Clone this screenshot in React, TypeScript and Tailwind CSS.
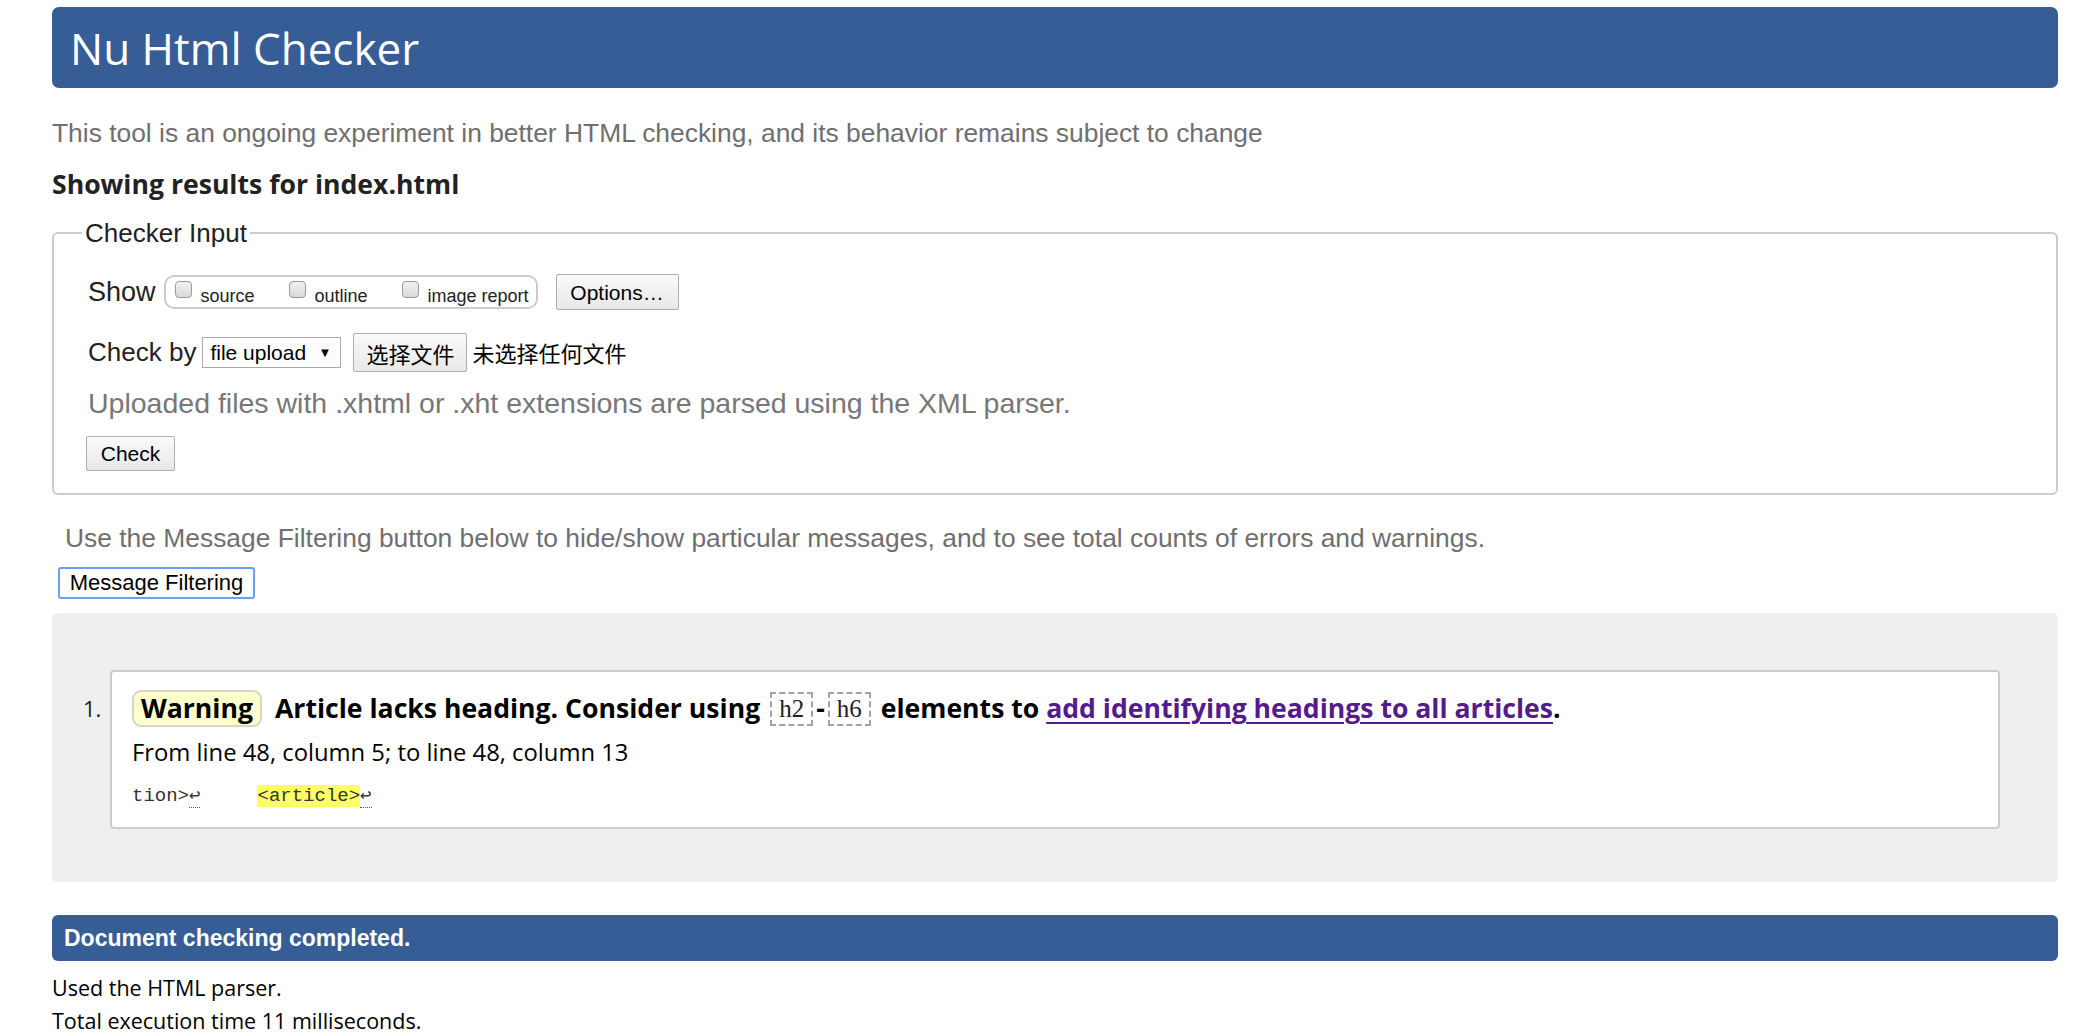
import React from "react"

const arial = "font-['Liberation_Sans',Arial,sans-serif]"
const segoe = "font-['Open_Sans',sans-serif]"
const mono = "font-['Liberation_Mono',monospace]"
const serif = "font-['Liberation_Serif',serif]"

function Checkbox({ label, className = "" }: { label: string; className?: string }) {
  return (
    <span className={`flex items-start gap-[9px] ${className}`}>
      <span className="mt-[4px] inline-block h-[17px] w-[17px] rounded-[4px] border border-[#9a9a9a] bg-gradient-to-b from-[#f2f2f2] to-[#d9d9d9]" />
      <span className={`${arial} mt-[10px] text-[18px] leading-none text-[#222]`}>{label}</span>
    </span>
  )
}

function Btn({ children, className = "" }: { children: React.ReactNode; className?: string }) {
  return (
    <button
      className={`${arial} rounded-[2px] border border-[#adadad] bg-gradient-to-b from-[#fafafa] to-[#e8e8e8] leading-none text-black ${className}`}
    >
      {children}
    </button>
  )
}

export default function App() {
  return (
    <div className="min-h-screen bg-white">
      <div className="ml-[52px] w-[2006px] pt-[7px]">
        {/* header */}
        <div className="flex h-[81px] items-center rounded-[7px] bg-[#365d95] pl-[18px]">
          <h1 className={`${segoe} text-[44px] leading-none text-white`}>Nu Html Checker</h1>
        </div>

        <p className={`${arial} mt-[30px] text-[26.4px] leading-[30px] text-[#6f6f6f]`}>
          This tool is an ongoing experiment in better HTML checking, and its behavior remains subject to change
        </p>

        <h2 className={`${segoe} mt-[21px] text-[26.6px] font-bold leading-[30px] text-[#222]`}>
          Showing results for index.html
        </h2>

        {/* checker input */}
        <fieldset className="mt-[21px] rounded-[6px] border-2 border-[#cccccc] px-[34px] pb-[22px]">
          <legend className={`${arial} ml-[-6px] px-[3px] text-[26px] leading-none text-[#222]`}>Checker Input</legend>

          <div className="mt-[28px] flex h-[36px] items-center">
            <span className={`${arial} text-[27px] text-[#222]`}>Show</span>
            <div className="ml-[8px] flex h-[34px] w-[374px] items-start rounded-[10px] border-2 border-[#cccccc] pl-[9px]">
              <Checkbox label="source" className="w-[114px]" />
              <Checkbox label="outline" className="w-[113px]" />
              <Checkbox label="image report" />
            </div>
            <Btn className="ml-[18px] h-[36px] w-[123px] text-[21px]">Options…</Btn>
          </div>

          <div className="mt-[23px] flex h-[39px] items-center">
            <span className={`${arial} text-[26px] text-[#222]`}>Check by</span>
            <div className={`${arial} ml-[6px] flex h-[31px] w-[139px] items-center justify-between border border-[#a9a9a9] bg-white pl-[7px] pr-[9px] text-[21px] text-black`}>
              <span>file upload</span>
              <span className="text-[13px]">▼</span>
            </div>
            <Btn className="ml-[12px] h-[39px] w-[114px] !font-['Noto_Sans_CJK_SC',sans-serif] text-[22px]">选择文件</Btn>
            <span className="ml-[5px] font-['Noto_Sans_CJK_SC',sans-serif] text-[22px] text-black">未选择任何文件</span>
          </div>

          <p className={`${arial} mt-[14px] text-[28.5px] leading-[34px] text-[#777777]`}>
            Uploaded files with .xhtml or .xht extensions are parsed using the XML parser.
          </p>

          <Btn className="ml-[-2px] mt-[16px] h-[35px] w-[89px] text-[21px]">Check</Btn>
        </fieldset>

        <p className={`${arial} mt-[28px] pl-[13px] text-[26.4px] leading-[30px] text-[#6f6f6f]`}>
          Use the Message Filtering button below to hide/show particular messages, and to see total counts of errors and warnings.
        </p>

        <button
          className={`${arial} ml-[6px] mt-[14px] h-[32px] w-[197px] rounded-[3px] border-2 border-[#6aa0f0] bg-white text-[22px] leading-none text-black`}
        >
          Message Filtering
        </button>

        {/* messages */}
        <div className="mt-[14px] rounded-[5px] bg-[#efefef] pb-[53px] pl-[58px] pr-[58px] pt-[57px]">
          <ol className="list-none">
            <li className="relative">
              <span className={`${segoe} absolute left-[-27px] top-[27px] text-[22px] leading-none text-[#222]`}>1.</span>
              <div className="rounded-[4px] border-2 border-[#cccccc] bg-white pb-[18px] pl-[20px] pr-[20px] pt-[18px]">
                <p className={`${segoe} flex h-[37px] items-center text-[26.6px] font-bold leading-none text-black`}>
                  <span className="inline-flex h-[37px] items-center rounded-[9px] border-2 border-[#d6d6c2] bg-[#ffffcc] px-[7px]">
                    Warning
                  </span>
                  <span className="ml-[13px]">Article lacks heading. Consider using</span>
                  <code className={`${serif} ml-[10px] inline-flex h-[34px] items-center border-2 border-dashed border-[#a3a3a3] px-[7px] text-[25px] font-normal text-[#222]`}>h2</code>
                  <span className="mx-[3px]">-</span>
                  <code className={`${serif} inline-flex h-[34px] items-center border-2 border-dashed border-[#a3a3a3] px-[7px] text-[25px] font-normal text-[#222]`}>h6</code>
                  <span className="ml-[10px]">elements to&nbsp;</span>
                  <a className="text-[#551a8b] underline decoration-2 underline-offset-[4px]" href="#">
                    add identifying headings to all articles
                  </a>
                  <span>.</span>
                </p>
                <p className={`${segoe} mt-[11px] text-[23.8px] leading-[28px] text-black`}>
                  From line 48, column 5; to line 48, column 13
                </p>
                <p className={`${mono} mt-[17px] whitespace-pre text-[19px] leading-[26px] text-[#333]`}>
                  <span>tion&gt;</span>
                  <span className="border-b border-dotted border-[#555]">↩</span>
                  <span>{"     "}</span>
                  <span className="bg-[#ffff66]">&lt;article&gt;</span>
                  <span className="border-b border-dotted border-[#555]">↩</span>
                </p>
              </div>
            </li>
          </ol>
        </div>

        {/* footer */}
        <div className="mt-[33px] flex h-[46px] items-center rounded-[6px] bg-[#365d95] pl-[12px]">
          <span className={`${arial} text-[23px] font-bold leading-none text-white`}>Document checking completed.</span>
        </div>
        <p className={`${segoe} mt-[10px] text-[21.5px] leading-[33px] text-black`}>Used the HTML parser.</p>
        <p className={`${segoe} text-[21.5px] leading-[33px] text-black`}>Total execution time 11 milliseconds.</p>
      </div>
    </div>
  )
}
